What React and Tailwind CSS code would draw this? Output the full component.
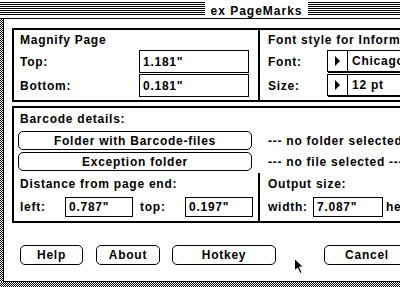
import React from "react";

const checker =
  "bg-[image:repeating-conic-gradient(#000_0%_25%,#fff_0%_50%)] bg-size-[2px_2px]";
const stripes =
  "bg-[image:repeating-linear-gradient(to_bottom,#000_0px,#000_1px,#fff_1px,#fff_2px)]";

const Field = ({ value, w }) => (
  <div className={`${w} h-full border border-black flex items-center pl-[3px] leading-[14px]`}>
    {value}
  </div>
);

const Popup = ({ value }) => (
  <div className="h-[22px] w-[120px] border border-black shadow-[1px_1px_0_0_#000] flex">
    <div className="w-[20px] border-r border-black flex items-center justify-center">
      <svg width="6" height="10" viewBox="0 0 6 10">
        <polygon points="0,0 5,5 0,10" fill="#000" />
      </svg>
    </div>
    <div className="flex items-center pl-[4px] leading-[14px]">{value}</div>
  </div>
);

const Btn = ({ label, w, className = "" }) => (
  <div
    className={`${w} h-full border border-black rounded-[5px] flex items-center justify-center leading-[14px] ${className}`}
  >
    {label}
  </div>
);

export default function App() {
  return (
    <div className="w-[400px] h-[287px] overflow-hidden relative bg-white text-black font-['Liberation_Sans',Arial,sans-serif] font-bold text-[12px] tracking-[0.75px] flex flex-col">
      {/* Title bar */}
      <div className="h-[19px] shrink-0 border-b border-black pt-[2px]">
        <div className="h-[14px] flex">
          <div className={`w-[205px] ${stripes}`} />
          <div className="w-[103px] bg-white text-center leading-[14px] tracking-[1px] pt-[2px]">
            ex PageMarks
          </div>
          <div className={`flex-1 ${stripes}`} />
        </div>
      </div>

      <div className="flex flex-1 min-h-0">
        <div className={`w-[3px] shrink-0 ${checker}`} />
        <div className="flex-1 border-l border-b border-black flex flex-col">
          {/* Magnify / Font box */}
          <div className="mt-[9px] ml-[8px] w-[460px] border-2 border-black flex shrink-0">
            <div className="w-[244px] pl-[6px] pb-[3px] flex flex-col">
              <div className="h-[20px] flex items-center leading-[14px]">Magnify Page</div>
              <div className="h-[23px] flex items-center">
                <span className="w-[119px]">Top:</span>
                <Field value={'1.181"'} w="w-[110px]" />
              </div>
              <div className="h-[23px] mt-[1px] flex items-center">
                <span className="w-[119px]">Bottom:</span>
                <Field value={'0.181"'} w="w-[110px]" />
              </div>
            </div>
            <div className="flex-1 border-l-2 border-black pl-[8px] flex flex-col">
              <div className="h-[20px] flex items-center leading-[14px] whitespace-nowrap">
                Font style for Information
              </div>
              <div className="h-[23px] flex items-start">
                <span className="w-[59px] self-center">Font:</span>
                <Popup value="Chicago" />
              </div>
              <div className="h-[23px] mt-[1px] flex items-start">
                <span className="w-[59px] self-center">Size:</span>
                <Popup value="12 pt" />
              </div>
            </div>
          </div>

          {/* Barcode box */}
          <div className="mt-[4px] ml-[8px] w-[460px] border-2 border-black flex flex-col shrink-0">
            <div className="h-[21px] pl-[6px] flex items-center leading-[14px]">Barcode details:</div>
            <div className="mt-[2px] h-[19px] flex items-center">
              <Btn label="Folder with Barcode-files" w="w-[234px] ml-[4px]" />
              <span className="ml-[16px] whitespace-nowrap">--- no folder selected ---</span>
            </div>
            <div className="mt-[2px] h-[19px] flex items-center">
              <Btn label="Exception folder" w="w-[234px] ml-[4px]" />
              <span className="ml-[16px] whitespace-nowrap">--- no file selected ---</span>
            </div>
            <div className="mt-[2px] flex">
              <div className="w-[244px] pl-[6px] pb-[4px] flex flex-col">
                <div className="h-[22px] flex items-center leading-[14px]">Distance from page end:</div>
                <div className="mt-[2px] h-[20px] flex items-center">
                  <span className="w-[45px]">left:</span>
                  <Field value={'0.787"'} w="w-[68px]" />
                  <span className="w-[45px] ml-[7px]">top:</span>
                  <Field value={'0.197"'} w="w-[68px]" />
                </div>
              </div>
              <div className="flex-1 border-l-2 border-black pl-[8px] pb-[4px] flex flex-col">
                <div className="h-[22px] flex items-center leading-[14px]">Output size:</div>
                <div className="mt-[2px] h-[20px] flex items-center">
                  <span className="w-[45px]">width:</span>
                  <Field value={'7.087"'} w="w-[70px]" />
                  <span className="ml-[3px]">height:</span>
                </div>
              </div>
            </div>
          </div>

          {/* Bottom buttons */}
          <div className="mt-[22px] ml-[16px] h-[20px] flex shrink-0">
            <Btn label="Help" w="w-[63px]" />
            <Btn label="About" w="w-[64px]" className="ml-[13px]" />
            <Btn label="Hotkey" w="w-[104px]" className="ml-[12px]" />
            <Btn label="Cancel" w="w-[86px]" className="ml-[48px] shrink-0" />
          </div>
        </div>
      </div>
      <div className={`h-[5px] shrink-0 ${checker}`} />

      {/* Mouse pointer */}
      <svg className="absolute left-[293px] top-[257px]" width="12" height="18" viewBox="0 0 12 18">
        <path d="M1.5 1.5 L1.5 14 L4.5 11 L7 16.5 L9 15.5 L6.5 10 L10.5 10 Z" fill="#000" stroke="#fff" strokeWidth="1" />
      </svg>
    </div>
  );
}
